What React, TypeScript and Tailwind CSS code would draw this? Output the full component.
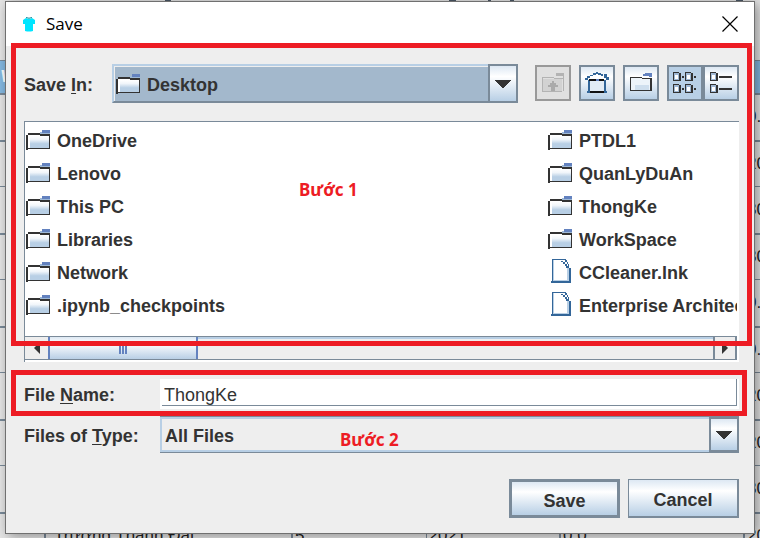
import type { ReactNode } from "react";

const leftFiles = ["OneDrive", "Lenovo", "This PC", "Libraries", "Network", ".ipynb_checkpoints"];
const rightFiles = ["PTDL1", "QuanLyDuAn", "ThongKe", "WorkSpace", "CCleaner.lnk", "Enterprise Architect.lnk"];
const scores = ["0.0", "20", "30", "30", "0.0", "0.0", "20", "20", "30", "20"];

const metal = "bg-linear-to-b from-[#dde8f3] via-white via-30% to-[#b8cfe5]";

function FolderIcon() {
  return (
    <svg width="24" height="20" viewBox="0 0 24 20" shapeRendering="crispEdges" className="shrink-0" aria-hidden="true">
      <defs>
        <linearGradient id="folderFill" x1="0" y1="0" x2="0" y2="1">
          <stop offset="0" stopColor="#ffffff" />
          <stop offset="0.3" stopColor="#f0f5fa" />
          <stop offset="0.65" stopColor="#b8cfe5" />
          <stop offset="1" stopColor="#b8cfe5" />
        </linearGradient>
      </defs>
      <path d="M2 5H23V18H2Z" fill="#fff" />
      <path d="M4 6H23V18H4Z" fill="url(#folderFill)" />
      <path d="M0 5H2V20H0ZM2 3H14V5H2ZM14 4H24V6H14ZM23 5H24V19H23ZM2 18H24V19H2Z" fill="#333" />
      <path d="M16 0H24V3H16Z" fill="#6382bf" />
      <path d="M14 2H16V3H24V4H14Z" fill="#9db8d6" />
    </svg>
  );
}

function FileIcon() {
  return (
    <svg width="20" height="24" viewBox="0 0 20 24" shapeRendering="crispEdges" className="shrink-0" aria-hidden="true">
      <path d="M1 1H14L19 8V22H1Z" fill="#fff" />
      <path d="M2 1H3V21H18V22H2Z" fill="#b8cfe5" />
      <path d="M16 9H18V21H16Z" fill="#b8cfe5" />
      <path d="M1 0H15V1H1ZM1 0H2V23H1ZM0 22H20V24H0ZM18 9H20V23H18Z" fill="#336699" />
      <path d="M10 2H12V3H10ZM12 3H14V5H12ZM14 1H16V3H14ZM14 5H16V7H14ZM16 3H17V5H16ZM17 5H18V9H17ZM15 7H17V9H15Z" fill="#336699" />
    </svg>
  );
}

function ToolButton({ label, look, children }: { label: string; look: string; children: ReactNode }) {
  return (
    <button
      type="button"
      aria-label={label}
      className={`flex h-9 w-9 shrink-0 items-center justify-center border-2 ${look}`}
    >
      {children}
    </button>
  );
}

function DropArrow() {
  return (
    <span className={`pointer-events-none absolute inset-y-0 right-0 flex w-[30px] items-center justify-center border-2 border-[#7a8a99] ${metal}`}>
      <svg width="16" height="8" viewBox="0 0 16 8" shapeRendering="crispEdges" aria-hidden="true">
        <path d="M0 0H16L9 8H7Z" fill="#333" />
      </svg>
    </span>
  );
}

function FileColumn({ names, width }: { names: string[]; width: string }) {
  return (
    <ul className={`shrink-0 ${width}`}>
      {names.map((name) => (
        <li key={name} className="flex h-[33px] items-center whitespace-nowrap">
          <span className="flex w-[31px] shrink-0">
            {name.endsWith(".lnk") ? <span className="pb-1 pl-[3px]"><FileIcon /></span> : <span className="pb-0.5"><FolderIcon /></span>}
          </span>
          {name}
        </li>
      ))}
    </ul>
  );
}

function StudentTable() {
  return (
    <table className="w-full table-fixed border-collapse text-[17px] text-[#222]">
      <colgroup>
        <col className="w-[45px]" />
        <col className="w-[247px]" />
        <col className="w-[134px]" />
        <col className="w-[134px]" />
        <col />
        <col className="w-4" />
      </colgroup>
      <thead>
        <tr className="h-[33px] border-t border-b-2 border-[#7a8a99] bg-[#85b9e2] text-white">
          <th className="p-0 text-left italic">V</th>
          <th /><th /><th /><th /><th />
        </tr>
      </thead>
      <tbody>
        {scores.map((score, i) => (
          <tr key={i} className={i % 2 ? "h-[46px] border-b border-[#7a8a99]" : "h-[47px] border-b-2 border-[#7a8a99]"}>
            <td className="border-r-2 border-[#7a8a99] p-0" />
            <td className="border-r-2 border-[#7a8a99] p-0 pl-2 whitespace-nowrap">Trương Thành Đạt</td>
            <td className="border-r border-[#7a8a99] p-0 pl-0.5">5</td>
            <td className="border-r-2 border-[#7a8a99] p-0 pl-0.5">2021</td>
            <td className="border-r-2 border-[#7a8a99] p-0 pl-0.5">0.0</td>
            <td className="p-0 pl-0.5 whitespace-nowrap">{score}</td>
          </tr>
        ))}
      </tbody>
    </table>
  );
}

export default function App() {
  return (
    <div className="relative h-screen overflow-hidden bg-[#e6e6e6] font-['Liberation_Sans',Arial,sans-serif] text-[18px] leading-[22px] text-[#333]">
      <svg className="h-[60px] w-full" viewBox="0 0 760 60" preserveAspectRatio="none" aria-hidden="true">
        <path d="M165 0H171V2H165ZM449 0H456V2H449ZM488 0H491V2H488ZM510 0H514V2H510ZM736 0H743V2H736Z" fill="#4b5866" />
      </svg>
      <StudentTable />

      <div
        role="dialog"
        aria-label="Save"
        className="absolute inset-x-[5px] top-px border border-[#707070] bg-[#eee] shadow-[3px_2px_12px_rgba(0,0,0,0.4)]"
      >
        <header className="flex h-11 items-center justify-between bg-white pr-4 pl-[17px] text-black">
          <div className="flex items-center gap-[11px]">
            <svg width="12" height="15" viewBox="0 0 12 15" aria-hidden="true">
              <path d="M3 1Q6 3 9 1L12 3V7L10 7V14Q6 15 2 14V7L0 7V3Z" fill="#00e5ff" />
              <path d="M3 .5Q6 2 9 .5" fill="none" stroke="#168a99" strokeWidth="1" />
            </svg>
            <h1 className="font-['Open_Sans','Noto_Sans',sans-serif] text-[17px]">Save</h1>
          </div>
          <button type="button" aria-label="Close">
            <svg width="16" height="16" viewBox="0 0 16 16" aria-hidden="true">
              <path d="M.5 .5L15.5 15.5M15.5 .5L.5 15.5" stroke="#000" strokeWidth="1.2" />
            </svg>
          </button>
        </header>

        <form className="pt-[18px] pr-[15px] pb-[15px] pl-[18px] font-bold" onSubmit={(e) => e.preventDefault()}>
          <section className="relative">
            <div className="flex h-[39px] items-center">
              <label htmlFor="folder" className="w-[88px] shrink-0 pt-0.5">
                Save <u className="underline-offset-2">I</u>n:
              </label>
              <div className="relative h-full flex-1">
                <select
                  id="folder"
                  className="h-full w-full appearance-none border-2 border-[#b8cfe5] border-b-[#7a8a99] bg-[#a3b8cc] pt-[3px] pl-[33px] font-bold inset-shadow-[1px_1px_0_#eee]"
                >
                  <option>Desktop</option>
                </select>
                <span className="pointer-events-none absolute top-[10px] left-1">
                  <FolderIcon />
                </span>
                <DropArrow />
              </div>
              <div className="mb-0.5 ml-[17px] flex gap-2">
                <ToolButton label="Up One Level" look="border-[#999] bg-[#e0e0e0]">
                  <svg width="22" height="19" viewBox="0 0 22 19" shapeRendering="crispEdges" aria-hidden="true">
                    <path d="M1 6H20V18H1Z" fill="#d2d2d2" />
                    <path d="M0 4H12V5H1V18H20V19H0ZM12 5H22V6H12ZM21 2H22V18H21ZM14 0H22V3H14Z" fill="#b3b3b3" />
                    <path d="M10 8H12V10H14V12H16V14H13V18H9V14H6V12H8V10H10Z" fill="#aaa" />
                  </svg>
                </ToolButton>
                <ToolButton label="Home" look={`border-[#7a8a99] ${metal}`}>
                  <svg width="24" height="22" viewBox="0 0 24 22" shapeRendering="crispEdges" aria-hidden="true">
                    <path d="M4 8H20V20H4Z" fill="#e2ecf5" />
                    <path d="M3 7L12 1L21 7Z" fill="#fff" />
                    <path d="M11 0H13V2H11ZM8 1H11V3H8ZM13 1H16V3H13ZM5 3H8V4H5ZM16 2H18V4H16ZM19 2H22V6H19ZM2 4H5V6H2ZM0 6H3V8H0ZM21 5H24V8H21ZM3 8H5V21H3ZM19 8H21V21H19ZM2 19H4V21H2ZM20 19H22V21H20Z" fill="#336699" />
                    <path d="M4 7H11V9H4ZM14 7H19V9H14ZM5 19H19V21H5Z" fill="#111" />
                    <path d="M11 7H14V9H11Z" fill="#6382bf" />
                  </svg>
                </ToolButton>
                <ToolButton label="Create New Folder" look={`border-[#7a8a99] ${metal}`}>
                  <svg width="22" height="19" viewBox="0 0 22 19" shapeRendering="crispEdges" aria-hidden="true">
                    <path d="M1 5H20V18H1Z" fill="#edf4fa" />
                    <path d="M5 12H19V17H5Z" fill="#cfdfee" />
                    <path d="M0 4H12V5H1V17H20V5H22V18H0ZM12 5H22V6H12Z" fill="#333" />
                    <path d="M15 0H22V4H19V3H13V1H15Z" fill="#6382bf" />
                  </svg>
                </ToolButton>
                <div className="flex">
                  <ToolButton label="List" look="border-[#7a8a99] bg-[#b8cfe5]">
                    <svg width="24" height="22" viewBox="0 0 24 22" shapeRendering="crispEdges" aria-hidden="true">
                      {[0, 12].map((x) =>
                        [0, 12].map((y) => (
                          <g key={`${x}-${y}`} transform={`translate(${x} ${y})`}>
                            <path d="M0 0H6V1H8V9H0Z" fill="#333" />
                            <path d="M1 1H6V8H1Z" fill="#9fb7d3" />
                            <path d="M2 3H5V7H2Z" fill="#fff" />
                            <path d="M9 4H11V6H9Z" fill="#333" />
                          </g>
                        ))
                      )}
                    </svg>
                  </ToolButton>
                  <ToolButton label="Details" look={`border-[#7a8a99] ${metal}`}>
                    <svg width="24" height="22" viewBox="0 0 24 22" shapeRendering="crispEdges" aria-hidden="true">
                      {[0, 12].map((y) => (
                        <g key={y} transform={`translate(1 ${y})`}>
                          <path d="M0 0H6V1H8V9H0Z" fill="#333" />
                          <path d="M1 1H6V8H1Z" fill="#9fb7d3" />
                          <path d="M2 3H5V7H2Z" fill="#fff" />
                          <path d="M9 4H22V6H9Z" fill="#333" />
                        </g>
                      ))}
                    </svg>
                  </ToolButton>
                </div>
              </div>
            </div>

            <div className="mt-[18px] border-t border-l border-[#7a8a99] bg-white pr-0.5 pb-0.5">
              <div className="flex overflow-hidden pt-0.5 pb-[14px] pl-px">
                <FileColumn names={leftFiles} width="w-[522px]" />
                <FileColumn names={rightFiles} width="w-auto" />
              </div>
              <div className="flex h-6 border-y border-[#7a8a99] bg-[#eee] inset-shadow-[0_2px_0_#b8cfe5]">
                <button type="button" aria-label="Scroll left" className="flex w-[23px] items-center justify-center bg-[#eee]">
                  <svg width="6" height="12" viewBox="0 0 6 12" aria-hidden="true"><path d="M6 0V12L0 6Z" fill="#333" /></svg>
                </button>
                <div className={`flex w-[150px] items-center justify-center gap-px border-x-2 border-[#6382bf] ${metal}`}>
                  <i className="h-3 w-0.5 bg-[#6382bf]" />
                  <i className="h-3 w-0.5 bg-[#6382bf]" />
                  <i className="h-3 w-0.5 bg-[#6382bf]" />
                </div>
                <button type="button" aria-label="Scroll right" className="ml-auto flex w-6 items-center justify-center border-x-2 border-[#7a8a99] bg-[#eee]">
                  <svg width="6" height="12" viewBox="0 0 6 12" aria-hidden="true"><path d="M0 0V12L6 6Z" fill="#333" /></svg>
                </button>
              </div>
            </div>

            <div className="pointer-events-none absolute -top-[21px] -right-[13px] bottom-4 -left-[13px] border-5 border-[#ed1c24]" />
            <p className="absolute top-[115px] left-[275px] font-['Noto_Sans','Open_Sans',sans-serif] text-[17px] text-[#ed1c24]">Bước 1</p>
          </section>

          <div className="relative mt-[17px] flex h-[30px] items-center">
            <label htmlFor="name" className="w-[136px] shrink-0 pt-0.5">
              File <u className="underline-offset-2">N</u>ame:
            </label>
            <div className="h-full flex-1 bg-white pr-0.5 pb-[3px] pl-0.5">
              <input id="name" defaultValue="ThongKe" className="h-full w-full border-r border-b border-[#7a8a99] bg-white pt-[7px] pl-0.5 font-normal" />
            </div>
            <div className="pointer-events-none absolute -top-[9px] -right-2 -bottom-[7px] -left-[13px] border-5 border-[#ed1c24]" />
          </div>

          <div className="relative mt-[7px] flex h-[37px] items-center">
            <label htmlFor="type" className="w-[136px] shrink-0 pt-0.5">
              Files of <u className="underline-offset-2">T</u>ype:
            </label>
            <div className="relative h-full flex-1 border-y border-[#7a8a99]">
              <select id="type" className="h-full w-full appearance-none border-2 border-[#b8cfe5] bg-[#eee] pt-[3px] pl-[3px] font-bold">
                <option>All Files</option>
              </select>
              <DropArrow />
            </div>
            <p className="absolute top-[13px] left-[316px] font-['Noto_Sans','Open_Sans',sans-serif] text-[17px] text-[#ed1c24]">Bước 2</p>
          </div>

          <div className="mt-[26px] flex h-[39px] justify-end gap-2">
            <button type="submit" className={`w-[111px] border-3 border-[#7a8a99] pt-1 ${metal}`}>Save</button>
            <button type="button" className={`w-[111px] border border-r-2 border-b-2 border-[#7a8a99] pt-1 ${metal}`}>Cancel</button>
          </div>
        </form>
      </div>
    </div>
  );
}
